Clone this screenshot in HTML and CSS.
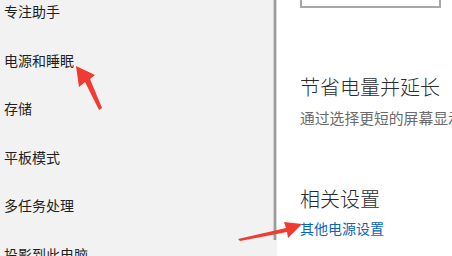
FILE: index.html
```html
<!DOCTYPE html>
<html lang="zh-CN">
<head>
    <meta charset="UTF-8">
    <meta name="viewport" content="width=device-width, initial-scale=1.0">
    <title>电源和睡眠</title>
    <link rel="stylesheet" href="styles.css">
</head>
<body>
    <div class="ventana">
        <!-- Menú lateral -->
        <ul class="menu">
            <li>专注助手</li>
            <li>电源和睡眠</li>
            <li>存储</li>
            <li>平板模式</li>
            <li>多任务处理</li>
            <li>投影到此电脑</li>
        </ul>
        <div class="divisor"></div>
        <!-- Contenido -->
        <div class="contenido">
            <div class="caja"></div>
            <h2 class="titulo">节省电量并延长</h2>
            <p class="texto">通过选择更短的屏幕显示时间</p>
            <h2 class="titulo titulo-rel">相关设置</h2>
            <a class="enlace" href="#">其他电源设置</a>
        </div>
    </div>

    <!-- Flechas rojas -->
    <svg class="flecha flecha1" width="40" height="50" viewBox="0 0 40 50">
        <polygon points="2,2 21,11 16,15 28,44 25,46 11,18 5,23" fill="#f03a32"/>
    </svg>
    <svg class="flecha flecha2" width="70" height="24" viewBox="0 0 70 24">
        <polygon points="2,21 50,10 48,4 66,6 52,20 51,14 4,23" fill="#f03a32"/>
    </svg>
</body>
</html>
```

FILE: styles.css
```css
body {
    margin: 0;
    padding: 0;
    background: #f2f2f2;
    font-family: "Noto Sans CJK SC", "Noto Sans", sans-serif;
    overflow: hidden;
}

.ventana {
    display: flex;
    height: 256px;
    overflow: hidden;
}

.menu {
    list-style: none;
    margin: -13px 0 0 0;
    padding: 0 0 0 4px;
    width: 269px;
    flex: none;
}

.menu li {
    font-size: 14px;
    line-height: 48.5px;
    height: 48.5px;
    color: #1f1f1f;
}

.divisor {
    width: 2px;
    height: 240px;
    background: #9c9c9c;
    border-left: 1px solid #d0d0d0;
    border-right: 1px solid #d8d8d8;
    flex: none;
}

.contenido {
    flex: 1;
    background: #fff;
    padding-left: 23px;
    overflow: hidden;
}

.caja {
    width: 137px;
    height: 30px;
    margin-top: -26px;
    border: 2px solid #a8a8a8;
}

.titulo {
    font-size: 20px;
    font-weight: 300;
    line-height: 28px;
    margin: 65px 0 0 0;
    color: #2b2b2b;
    white-space: nowrap;
}

.texto {
    font-size: 14.8px;
    line-height: 20px;
    margin: 7px 0 0 0;
    color: #6b6b6b;
    white-space: nowrap;
}

.titulo-rel {
    margin-top: 57px;
}

.enlace {
    display: block;
    font-size: 14px;
    line-height: 20px;
    margin-top: 5px;
    color: #0a66b8;
    text-decoration: none;
}

.flecha {
    position: absolute;
}

.flecha1 {
    left: 74px;
    top: 64px;
}

.flecha2 {
    left: 236px;
    top: 218px;
}
```
